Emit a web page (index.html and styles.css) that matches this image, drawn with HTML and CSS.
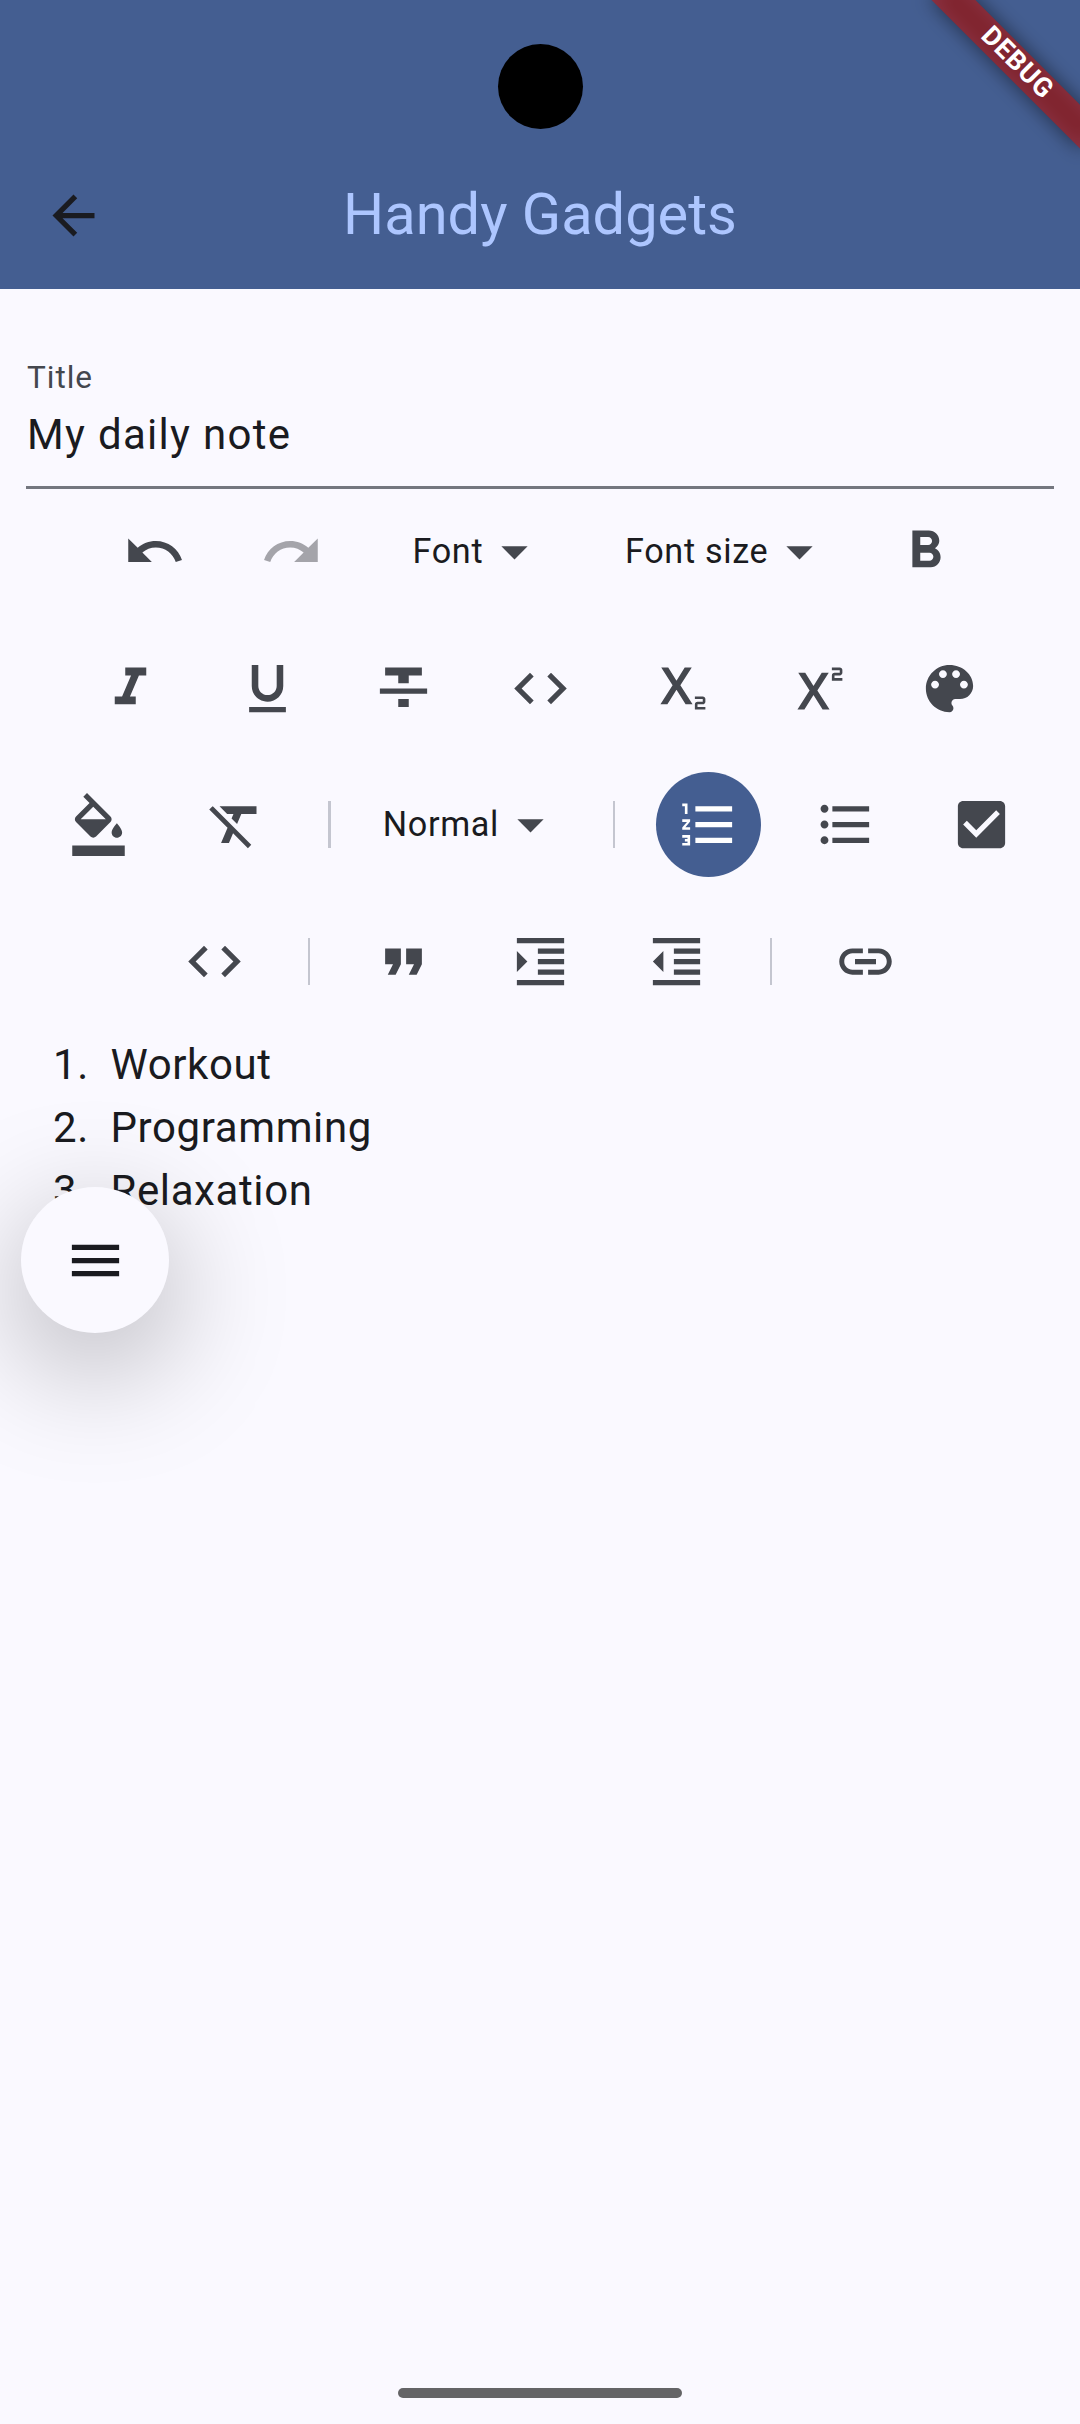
FILE: index.html
```html
<!DOCTYPE html>
<html lang="en">
<head>
<meta charset="utf-8">
<title>Handy Gadgets</title>
<link rel="stylesheet" href="styles.css">
</head>
<body>
<div class="screen">
  <header class="header">
    <div class="camera"></div>
    <div class="app-bar">
      <svg class="icon back" viewBox="0 0 24 24"><path d="M20 11H7.83l5.59-5.59L12 4l-8 8 8 8 1.41-1.41L7.83 13H20v-2z"/></svg>
      <h1 class="app-title">Handy Gadgets</h1>
    </div>
    <div class="debug"><div class="debug-band"><span class="debug-text">DEBUG</span></div></div>
  </header>

  <main class="main">
    <div class="field">
      <div class="field-label">Title</div>
      <div class="field-value">My daily note</div>
    </div>

    <div class="toolbar">
      <div class="row">
        <div class="tool"><svg class="icon" viewBox="0 0 24 24"><path d="M12.5 8c-2.65 0-5.05.99-6.9 2.6L2 7v9h9l-3.62-3.62c1.39-1.16 3.16-1.88 5.12-1.88 3.54 0 6.55 2.31 7.6 5.5l2.37-.78C21.08 11.03 17.15 8 12.5 8z"/></svg></div>
        <div class="tool disabled"><svg class="icon" viewBox="0 0 24 24"><path d="M18.4 10.6C16.55 8.99 14.15 8 11.5 8c-4.65 0-8.58 3.03-9.96 7.22L3.9 16c1.05-3.19 4.05-5.5 7.6-5.5 1.95 0 3.73.72 5.12 1.88L13 16h9V7l-3.6 3.6z"/></svg></div>
        <div class="select select-font"><span class="select-text">Font</span><svg class="icon" viewBox="0 0 24 24"><path d="M7 10l5 5 5-5z"/></svg></div>
        <div class="select select-size"><span class="select-text">Font size</span><svg class="icon" viewBox="0 0 24 24"><path d="M7 10l5 5 5-5z"/></svg></div>
        <div class="tool"><svg class="icon" viewBox="0 0 24 24"><path d="M15.6 10.79c.97-.67 1.65-1.77 1.65-2.79 0-2.26-1.75-4-4-4H7v14h7.04c2.09 0 3.71-1.7 3.71-3.79 0-1.52-.86-2.82-2.15-3.42zM10 6.5h3c.83 0 1.5.67 1.5 1.5s-.67 1.5-1.5 1.5h-3v-3zm3.5 9H10v-3h3.5c.83 0 1.5.67 1.5 1.5s-.67 1.5-1.5 1.5z"/></svg></div>
      </div>
      <div class="row">
        <div class="tool"><svg class="icon" viewBox="0 0 24 24"><path d="M10 4v3h2.21l-3.42 8H6v3h8v-3h-2.21l3.42-8H18V4z"/></svg></div>
        <div class="tool"><svg class="icon" viewBox="0 0 24 24"><path d="M12 17c3.31 0 6-2.69 6-6V3h-2.5v8c0 1.93-1.57 3.5-3.5 3.5S8.5 12.93 8.5 11V3H6v8c0 3.31 2.69 6 6 6zm-7 2v2h14v-2H5z"/></svg></div>
        <div class="tool"><svg class="icon" viewBox="0 0 24 24"><path d="M10 19h4v-3h-4v3zM5 4v3h5v3h4V7h5V4H5zM3 14h18v-2H3v2z"/></svg></div>
        <div class="tool"><svg class="icon" viewBox="0 0 24 24"><path d="M9.4 16.6L4.8 12l4.6-4.6L8 6l-6 6 6 6 1.4-1.4zm5.2 0l4.6-4.6-4.6-4.6L16 6l6 6-6 6-1.4-1.4z"/></svg></div>
        <div class="tool"><svg class="icon" viewBox="0 0 24 24"><path d="M22 18h-2v1h3v1h-4v-2c0-.55.45-1 1-1h2v-1h-3v-1h3c.55 0 1 .45 1 1v1c0 .55-.45 1-1 1zM5.88 18h2.66l3.4-5.42h.12l3.4 5.42h2.66l-4.65-7.27L17.81 4h-2.68l-3.07 4.99h-.12L8.85 4H6.19l4.32 6.73L5.88 18z"/></svg></div>
        <div class="tool"><svg class="icon" viewBox="0 0 24 24"><path d="M22 7h-2v1h3v1h-4V7c0-.55.45-1 1-1h2V5h-3V4h3c.55 0 1 .45 1 1v1c0 .55-.45 1-1 1zM5.88 20h2.66l3.4-5.42h.12l3.4 5.42h2.66l-4.65-7.27L17.81 6h-2.68l-3.07 4.99h-.12L8.85 6H6.19l4.32 6.73L5.88 20z"/></svg></div>
        <div class="tool"><svg class="icon" viewBox="0 0 24 24"><path d="M12 3c-4.97 0-9 4.03-9 9s4.03 9 9 9c.83 0 1.5-.67 1.5-1.5 0-.39-.15-.74-.39-1.01-.23-.26-.38-.61-.38-.99 0-.83.67-1.5 1.5-1.5H16c2.76 0 5-2.24 5-5 0-4.42-4.03-8-9-8zm-5.5 9c-.83 0-1.5-.67-1.5-1.5S5.67 9 6.5 9 8 9.67 8 10.5 7.33 12 6.5 12zm3-4C8.67 8 8 7.33 8 6.5S8.67 5 9.5 5s1.5.67 1.5 1.5S10.33 8 9.5 8zm5 0c-.83 0-1.5-.67-1.5-1.5S13.67 5 14.5 5s1.5.67 1.5 1.5S15.33 8 14.5 8zm3 4c-.83 0-1.5-.67-1.5-1.5S16.67 9 17.5 9s1.5.67 1.5 1.5-.67 1.5-1.5 1.5z"/></svg></div>
      </div>
      <div class="row">
        <div class="tool"><svg class="icon" viewBox="0 0 24 24"><path d="M16.56 8.94L7.62 0 6.21 1.41l2.38 2.38-5.15 5.15c-.59.59-.59 1.54 0 2.12l5.5 5.5c.29.29.68.44 1.06.44s.77-.15 1.06-.44l5.5-5.5c.59-.58.59-1.53 0-2.12zM5.21 10L10 5.21 14.79 10H5.21zM19 11.5s-2 2.17-2 3.5c0 1.1.9 2 2 2s2-.9 2-2c0-1.33-2-3.5-2-3.5zM2 20h20v4H2v-4z"/></svg></div>
        <div class="tool"><svg class="icon" viewBox="0 0 24 24"><path d="M3.27 5L2 6.27l6.97 6.97L6.5 19h3l1.57-3.66L16.73 21 18 19.73 3.55 5.27 3.27 5zM6 5v.18L8.82 8h2.4l-.72 1.68 2.1 2.1L14.21 8H20V5H6z"/></svg></div>
        <div class="sep"><div class="sep-line sep-thick"></div></div>
        <div class="select select-style"><span class="select-text">Normal</span><svg class="icon" viewBox="0 0 24 24"><path d="M7 10l5 5 5-5z"/></svg></div>
        <div class="sep"><div class="sep-line"></div></div>
        <div class="tool"><div class="active"><svg class="icon" viewBox="0 0 24 24"><path d="M2 17h2v.5H3v1h1v.5H2v1h3v-4H2v1zm1-9h1V4H2v1h1v3zm-1 3h1.8L2 13.1v.9h3v-1H3.2L5 10.9V10H2v1zm5-6v2h14V5H7zm0 14h14v-2H7v2zm0-6h14v-2H7v2z"/></svg></div></div>
        <div class="tool"><svg class="icon" viewBox="0 0 24 24"><path d="M4 10.5c-.83 0-1.5.67-1.5 1.5s.67 1.5 1.5 1.5 1.5-.67 1.5-1.5-.67-1.5-1.5-1.5zm0-6c-.83 0-1.5.67-1.5 1.5S3.17 7.5 4 7.5 5.5 6.83 5.5 6 4.83 4.5 4 4.5zm0 12c-.83 0-1.5.68-1.5 1.5s.68 1.5 1.5 1.5 1.5-.68 1.5-1.5-.67-1.5-1.5-1.5zM7 19h14v-2H7v2zm0-6h14v-2H7v2zm0-8v2h14V5H7z"/></svg></div>
        <div class="tool"><svg class="icon" viewBox="0 0 24 24"><path d="M19 3H5c-1.11 0-2 .9-2 2v14c0 1.1.89 2 2 2h14c1.11 0 2-.9 2-2V5c0-1.1-.89-2-2-2zm-9 14l-5-5 1.41-1.41L10 14.17l7.59-7.59L19 8l-9 9z"/></svg></div>
      </div>
      <div class="row">
        <div class="tool"><svg class="icon" viewBox="0 0 24 24"><path d="M9.4 16.6L4.8 12l4.6-4.6L8 6l-6 6 6 6 1.4-1.4zm5.2 0l4.6-4.6-4.6-4.6L16 6l6 6-6 6-1.4-1.4z"/></svg></div>
        <div class="sep"><div class="sep-line"></div></div>
        <div class="tool"><svg class="icon" viewBox="0 0 24 24"><path d="M6 17h3l2-4V7H5v6h3zm8 0h3l2-4V7h-6v6h3z"/></svg></div>
        <div class="tool"><svg class="icon" viewBox="0 0 24 24"><path d="M3 21h18v-2H3v2zM3 8v8l4-4-4-4zm8 9h10v-2H11v2zM3 3v2h18V3H3zm8 6h10V7H11v2zm0 4h10v-2H11v2z"/></svg></div>
        <div class="tool"><svg class="icon" viewBox="0 0 24 24"><path d="M11 17h10v-2H11v2zm-8-5l4 4V8l-4 4zm0 9h18v-2H3v2zM3 3v2h18V3H3zm8 6h10V7H11v2zm0 4h10v-2H11v2z"/></svg></div>
        <div class="sep"><div class="sep-line"></div></div>
        <div class="tool"><svg class="icon" viewBox="0 0 24 24"><path d="M3.9 12c0-1.71 1.39-3.1 3.1-3.1h4V7H7c-2.76 0-5 2.24-5 5s2.24 5 5 5h4v-1.9H7c-1.71 0-3.1-1.39-3.1-3.1zM8 13h8v-2H8v2zm9-6h-4v1.9h4c1.71 0 3.1 1.39 3.1 3.1s-1.39 3.1-3.1 3.1h-4V17h4c2.76 0 5-2.24 5-5s-2.24-5-5-5z"/></svg></div>
      </div>
    </div>

    <div class="note">
      <div class="item"><span class="num">1.</span><span>Workout</span></div>
      <div class="item"><span class="num">2.</span><span>Programming</span></div>
      <div class="item"><span class="num">3.</span><span>Relaxation</span></div>
    </div>
  </main>

  <div class="fab"><svg class="icon" viewBox="0 0 24 24"><path d="M3 18h18v-2H3v2zm0-5h18v-2H3v2zm0-7v2h18V6H3z"/></svg></div>

  <footer class="nav"><div class="nav-handle"></div></footer>
</div>
</body>
</html>
```

FILE: styles.css
```css
* { box-sizing: border-box; }

body {
  margin: 0;
  background: #faf9ff;
  color: #1a1b20;
  font-family: Roboto, "Liberation Sans", sans-serif;
}

.screen {
  position: relative;
  display: flex;
  flex-direction: column;
  width: 1080px;
  height: 2424px;
  overflow: hidden;
}

.icon {
  display: block;
  flex: none;
  width: 63px;
  height: 63px;
  fill: currentColor;
}

/* header */
.header {
  position: relative;
  display: flex;
  flex-direction: column;
  align-items: center;
  height: 289px;
  padding-top: 44px;
  background: #445e91;
  overflow: hidden;
}

.camera {
  width: 85px;
  height: 85px;
  border-radius: 50%;
  background: #000;
}

.app-bar {
  display: grid;
  grid-template-columns: 147px 1fr 147px;
  align-items: center;
  width: 100%;
  height: 147px;
  margin-top: 13px;
}

.back { justify-self: center; }

.app-title {
  margin: 0;
  padding-bottom: 3px;
  color: #adc6ff;
  font-size: 57.75px;
  font-weight: 400;
  line-height: 74px;
  text-align: center;
}

.debug {
  position: absolute;
  top: 0;
  right: 0;
  width: 0;
  height: 0;
  transform: rotate(45deg);
}

.debug-band {
  position: absolute;
  left: -105px;
  top: 73.5px;
  display: flex;
  align-items: center;
  justify-content: center;
  width: 210px;
  height: 31.5px;
}

.debug-band::before,
.debug-band::after {
  content: "";
  position: absolute;
  inset: 0;
}

.debug-band::before {
  background: rgba(0, 0, 0, 0.5);
  filter: blur(10px);
}

.debug-band::after { background: rgba(183, 28, 28, 0.627); }

.debug-text {
  position: relative;
  z-index: 1;
  padding-bottom: 2px;
  color: #fff;
  font-size: 26.8px;
  font-weight: 700;
  letter-spacing: 0.8px;
  line-height: 1;
}

/* title field */
.main { padding: 0 26px; }

.field {
  height: 200px;
  padding: 70px 0 0 1px;
  border-bottom: 3px solid #74777f;
}

.field-label {
  color: #44474e;
  font-size: 31.5px;
  letter-spacing: 0.98px;
  line-height: 38px;
}

.field-value {
  margin-top: 6px;
  font-size: 42px;
  letter-spacing: 1.31px;
  line-height: 63px;
}

/* toolbar */
.toolbar {
  display: flex;
  flex-direction: column;
  gap: 31.5px;
  margin: 10px -26px 0;
  color: #44474e;
}

.row {
  display: flex;
  align-items: center;
  justify-content: center;
  height: 105px;
}

.tool {
  display: flex;
  justify-content: center;
  width: 136.5px;
}

.disabled { color: #a4a4aa; }

.active {
  display: flex;
  align-items: center;
  justify-content: center;
  width: 105px;
  height: 105px;
  border-radius: 50%;
  background: #445e91;
  color: #fff;
}

.select {
  display: flex;
  align-items: center;
  justify-content: space-between;
  padding: 0 26px 0 27px;
}

.select-font { width: 212.5px; padding-left: 53px; }
.select-size { width: 285px; padding-left: 53px; }
.select-style { width: 232px; }

.select-text {
  padding-bottom: 2px;
  color: #1a1b20;
  font-size: 34.2px;
  letter-spacing: 0.66px;
  line-height: 40px;
  white-space: nowrap;
}

.sep {
  display: flex;
  justify-content: center;
  width: 52.5px;
}

.sep-line {
  width: 2px;
  height: 47px;
  background: #c4c6d0;
}

.sep-thick { width: 3px; }

/* note */
.note {
  margin-top: 19px;
  padding-left: 27px;
  font-size: 42px;
  letter-spacing: 0.6px;
  line-height: 63px;
}

.item { display: flex; }

.num { width: 57.5px; }

.fab {
  position: absolute;
  left: 21px;
  top: 1187px;
  display: flex;
  align-items: center;
  justify-content: center;
  width: 148px;
  height: 146px;
  border-radius: 50%;
  background: #faf9ff;
  box-shadow: 0 32px 115px 8px rgba(0, 0, 0, 0.25);
}

.nav {
  display: flex;
  justify-content: center;
  margin-top: auto;
  padding-bottom: 26px;
}

.nav-handle {
  width: 284px;
  height: 10px;
  border-radius: 5px;
  background: #646466;
}
```
